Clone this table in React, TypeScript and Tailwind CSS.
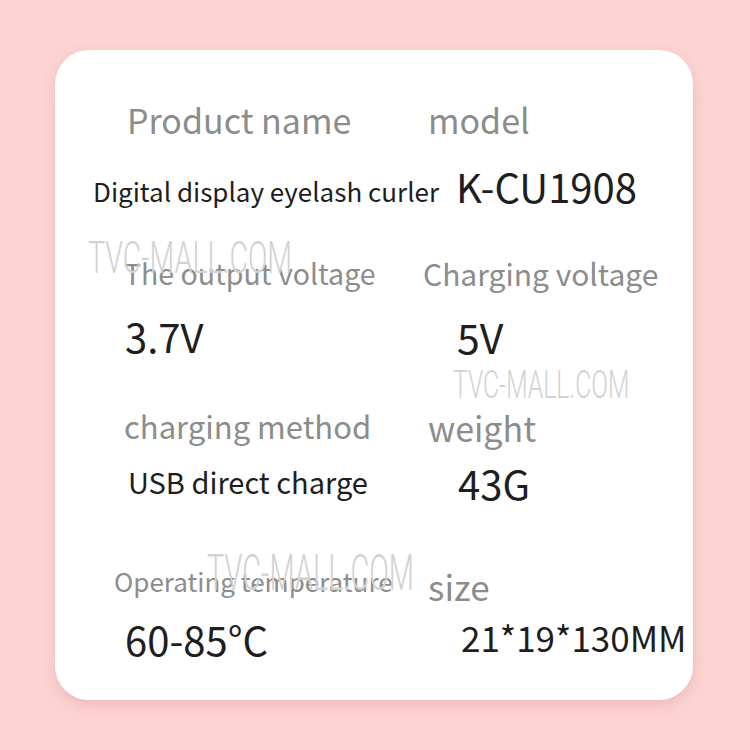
type Cell = { text: string; cls: string };

type Row = { mt: string; left: Cell; right: Cell; label?: boolean };

const rows: Row[] = [
  { mt: "mt-[50px]", label: true, left: { text: "Product name", cls: "ml-[72px] text-[34px]" }, right: { text: "model", cls: "ml-[5px] text-[34px]" } },
  { mt: "mt-[26px]", left: { text: "Digital display eyelash curler", cls: "ml-[38px] text-[26px]" }, right: { text: "K-CU1908", cls: "ml-[33px] text-[40px] mb-[10px]" } },
  { mt: "mt-[47px]", label: true, left: { text: "The output voltage", cls: "ml-[69px] text-[28.5px]" }, right: { text: "Charging voltage", cls: "ml-[0px] text-[30px]" } },
  { mt: "mt-[23px]", left: { text: "3.7V", cls: "ml-[70px] text-[40px]" }, right: { text: "5V", cls: "ml-[34px] text-[41px]" } },
  { mt: "mt-[48px]", label: true, left: { text: "charging method", cls: "ml-[69px] text-[31px]" }, right: { text: "weight", cls: "ml-[5px] text-[34px] mt-[4px]" } },
  { mt: "mt-[17px]", left: { text: "USB direct charge", cls: "ml-[73px] text-[29px] mb-[4px]" }, right: { text: "43G", cls: "ml-[35px] text-[40px]" } },
  { mt: "mt-[55px]", label: true, left: { text: "Operating temperature", cls: "ml-[59px] text-[26px]" }, right: { text: "size", cls: "ml-[5px] text-[35px] mt-[10px]" } },
  { mt: "mt-[19px]", left: { text: "60-85°C", cls: "ml-[70px] text-[40px] mt-[4px]" }, right: { text: "21*19*130MM", cls: "ml-[38px] text-[35px]" } },
];

function Watermark({ cls }: { cls: string }) {
  return (
    <div
      className={`absolute origin-left whitespace-nowrap font-light leading-none text-[#d2d2d2] ${cls}`}
      style={{ fontFamily: "Roboto, 'Liberation Sans', sans-serif" }}
    >
      TVC-MALL.COM
    </div>
  );
}

export default function App() {
  return (
    <div className="w-[750px] h-[750px] bg-[#fcd4d3] pt-[50px] pl-[55px]">
      <div
        className="relative w-[638px] h-[650px] rounded-[34px] bg-white shadow-[0_5px_14px_rgba(214,140,140,0.35)] flex flex-col"
        style={{ fontFamily: "'Noto Sans CJK SC', 'Noto Sans', sans-serif" }}
      >
        {rows.map((r, i) => (
          <div key={i} className={`grid grid-cols-[368px_1fr] h-[40px] items-center whitespace-nowrap leading-[40px] ${r.mt}`}>
            <div className={`${r.label ? "text-[#8c8c8c]" : "text-[#1e1e1e]"} ${r.left.cls}`}>{r.left.text}</div>
            <div className={`${r.label ? "text-[#8c8c8c]" : "text-[#1e1e1e]"} ${r.right.cls}`}>{r.right.text}</div>
          </div>
        ))}
        <Watermark cls="left-[33px] top-[186px] text-[44px] scale-x-[0.65]" />
        <Watermark cls="left-[398px] top-[316px] text-[38px] scale-x-[0.65]" />
        <Watermark cls="left-[152px] top-[498px] text-[50px] scale-x-[0.58]" />
      </div>
    </div>
  );
}
